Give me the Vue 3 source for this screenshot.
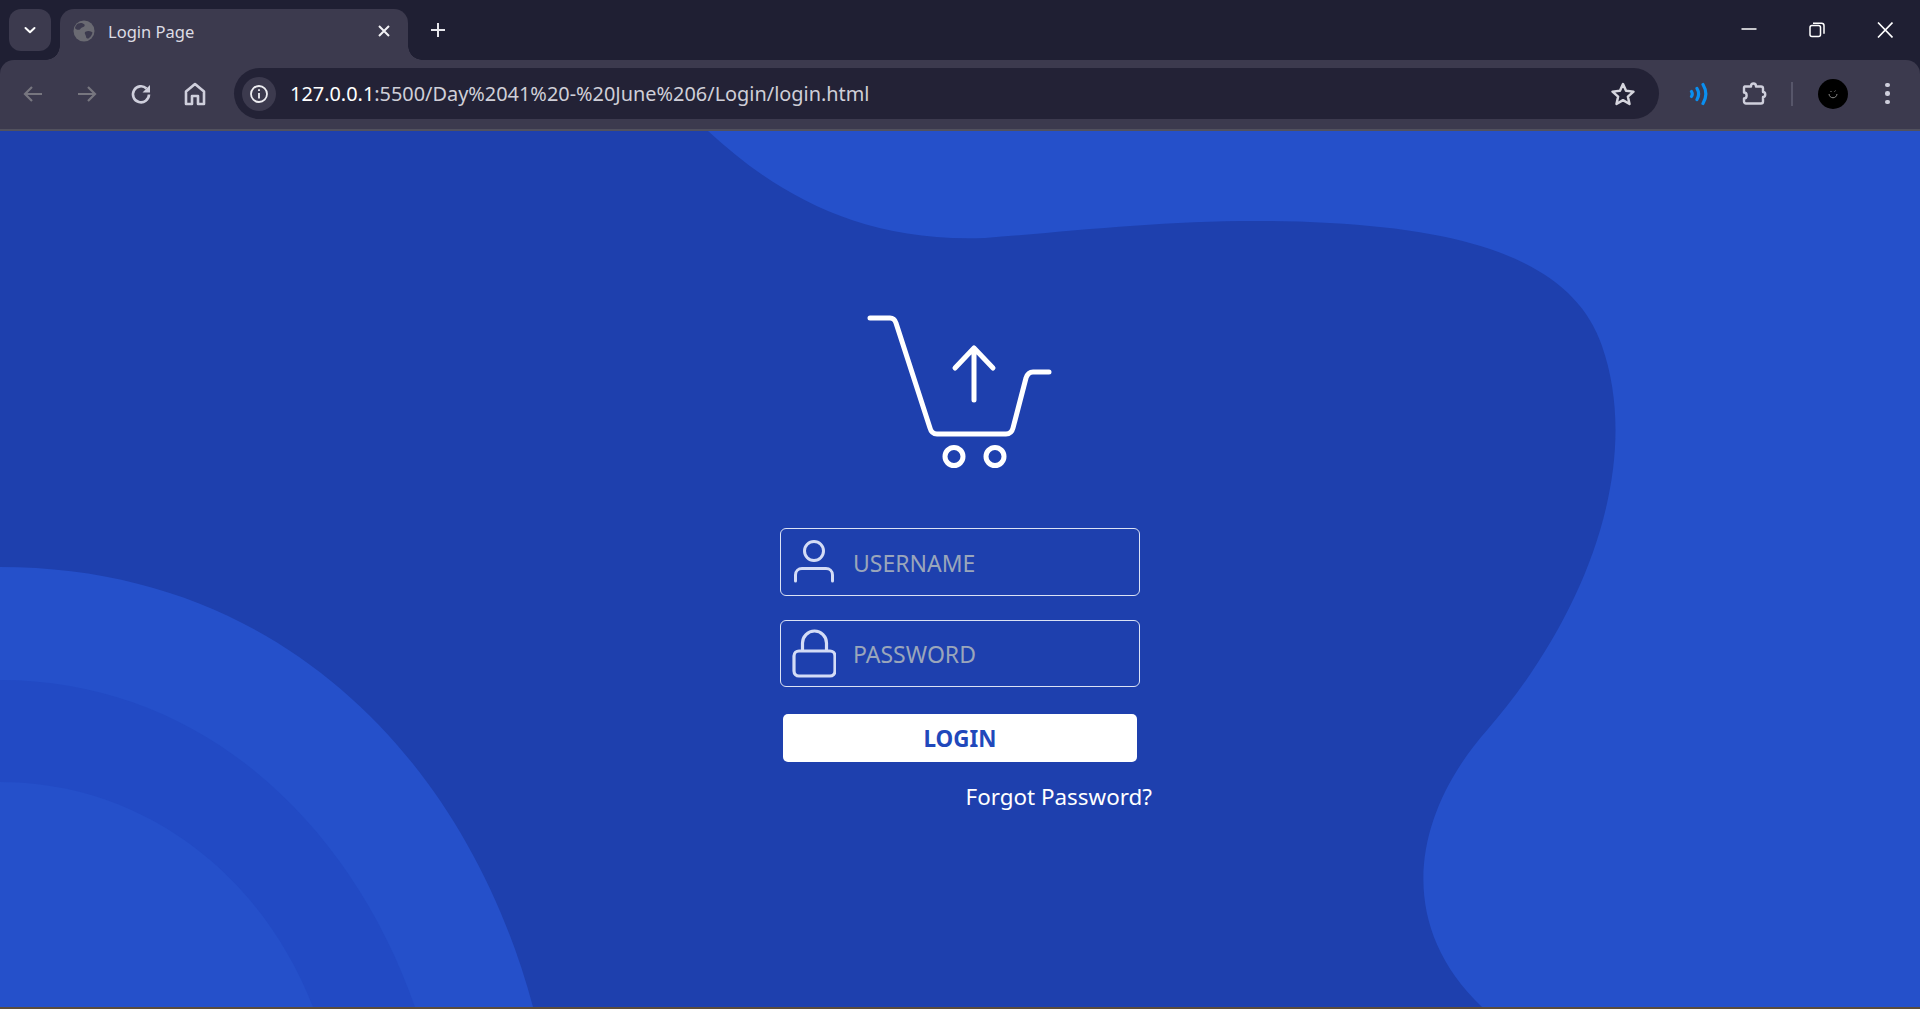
<script setup>
import { ref } from 'vue';

const username = ref('');
const password = ref('');
const url = '127.0.0.1';
const urlRest = ':5500/Day%2041%20-%20June%206/Login/login.html';
</script>

<template>
  <div class="window">
    <!-- tab strip -->
    <div class="tabstrip">
      <button class="tab-search">
        <svg width="16" height="16" viewBox="0 0 16 16"><path d="M3.500 6 8 10.200 12.500 6" fill="none" stroke="#fff" stroke-width="2" stroke-linecap="round" stroke-linejoin="round"/></svg>
      </button>
      <div class="tab">
        <svg class="favicon" width="22" height="22" viewBox="0 0 22 22">
          <circle cx="11" cy="11" r="10.500" fill="#6a6a72"/>
          <path d="M5 3.500c3-1 5-.5 6.500 1 .8 1.500-.8 2.500-2.500 3-1.500.5-1.500 2-3 2.300C4 10 2.500 9 2 8c.5-2 1.500-3.500 3-4.500ZM12 12c2-1 4-1.500 6-.5l1.500 1c-.5 2.500-2 4.500-4 6-1.500.3-2.500-.5-2.500-2s-2-2.800-1-4.500Z" fill="#3c3a4e"/>
        </svg>
        <span class="tab-title">Login Page</span>
        <svg class="tab-close" width="14" height="14" viewBox="0 0 14 14"><path d="M2 2l10 10M12 2 2 12" stroke="#f2f2f5" stroke-width="2"/></svg>
      </div>
      <button class="new-tab">
        <svg width="16" height="16" viewBox="0 0 16 16"><path d="M8 1v14M1 8h14" stroke="#e6e6ec" stroke-width="2"/></svg>
      </button>
      <div class="window-controls">
        <svg width="16" height="16" viewBox="0 0 16 16"><path d="M.5 7h15" stroke="#fff" stroke-width="1.500"/></svg>
        <svg width="16" height="16" viewBox="0 0 16 16" fill="none" stroke="#fff" stroke-width="1.500"><rect x="1" y="3.500" width="10.500" height="11" rx="2"/><path d="M4 1.200h8.500a2.500 2.500 0 0 1 2.500 2.500v8"/></svg>
        <svg width="16" height="16" viewBox="0 0 16 16"><path d="M1 .5l14.500 15M15.500.5 1 15.500" stroke="#fff" stroke-width="1.600"/></svg>
      </div>
    </div>

    <!-- toolbar -->
    <div class="toolbar">
      <div class="nav">
        <svg width="22" height="22" viewBox="0 0 22 22" fill="none" stroke="#77767f" stroke-width="2.200"><path d="M20 11H3M10 4l-7 7 7 7"/></svg>
        <svg width="22" height="22" viewBox="0 0 22 22" fill="none" stroke="#77767f" stroke-width="2.200"><path d="M2 11h17M12 4l7 7-7 7"/></svg>
        <svg width="22" height="22" viewBox="0 0 22 22" fill="none" stroke="#cfcfdc" stroke-width="2.600"><path d="M19 11.500A8 8 0 1 1 16.500 5.500"/><path d="M20 2v7.500h-7.500Z" fill="#cfcfdc" stroke="none"/></svg>
        <svg width="22" height="24" viewBox="0 0 22 24" fill="none" stroke="#cfcfdc" stroke-width="2.600"><path d="M2 22V9.500L11 2l9 7.500V22h-6v-8H8v8Z" stroke-linejoin="round"/></svg>
      </div>
      <div class="omnibox">
        <span class="site-info">
          <svg width="20" height="20" viewBox="0 0 20 20" fill="none" stroke="#eeeef2" stroke-width="1.800"><circle cx="10" cy="10" r="8"/><path d="M10 9v5.500M10 5.300v1.800"/></svg>
        </span>
        <span class="url"><span class="host">{{ url }}</span>{{ urlRest }}</span>
        <svg class="star" width="26" height="26" viewBox="0 0 24 24"><path d="M12 2.800l2.800 6.300 6.900.7-5.200 4.600 1.500 6.800-6-3.500-6 3.500 1.500-6.800-5.200-4.600 6.900-.7Z" fill="none" stroke="#d6d6de" stroke-width="2.300" stroke-linejoin="round"/></svg>
      </div>
      <div class="actions">
        <svg class="ext-wave" width="20" height="24" viewBox="0 0 20 24" fill="none" stroke="#0a8ff0" stroke-width="3.200" stroke-linecap="round"><path d="M2.500 9.500c1 1.600 1 3.400 0 5M8 6.500c2 3.400 2 7.600 0 11M14 2.500c3.600 6 3.600 13 0 19"/></svg>
        <svg class="ext-puzzle" width="26" height="26" viewBox="0 0 26 26" fill="none" stroke="#cfcfdc" stroke-width="2.400" stroke-linejoin="round"><path d="M3.500 5.500h6.500c0-4 5-4 5 0h5a2 2 0 0 1 2 2v3.500c3 0 3 5 0 5v4.500a2 2 0 0 1-2 2H5a2 2 0 0 1-2-2v-3c3.500 0 3.500-6 0-6V7a2 2 0 0 1 .5-1.500Z"/></svg>
        <span class="divider"></span>
        <span class="avatar">
          <svg width="12" height="12" viewBox="0 0 12 12" fill="none" stroke="#8a8a8a" stroke-width="1"><path d="M2 6c.5 5 7.500 5 8 0M3.500 3.500h1M7.500 3.500l1-.8"/></svg>
        </span>
        <span class="dots"><i></i><i></i><i></i></span>
      </div>
    </div>

    <!-- page -->
    <main class="page">
      <svg class="blobs" width="1920" height="876" viewBox="0 0 1920 876">
        <rect width="1920" height="876" fill="#2550ca"/>
        <path d="M708 0C775 62 860 112 985 107C1100 98 1200 85 1330 92C1480 100 1575 135 1602 215C1642 330 1590 480 1488 598C1415 680 1392 790 1482 876H533C470 640 290 436 0 436V0Z" fill="#1e40ae"/>
        <path d="M0 549C200 549 350 690 415 876H0Z" fill="#224ac4"/>
        <path d="M0 651C140 651 260 740 313 876H0Z" fill="#2550ca"/>
      </svg>

      <form class="login" @submit.prevent>
        <svg class="cart" width="200" height="170" viewBox="0 0 200 170" fill="none" stroke="#fff" stroke-width="5" stroke-linecap="round" stroke-linejoin="round">
          <path d="M10 8h20c3 0 5 2 6 5l34 105c1 4 3 6 7 6h69c4 0 6-2 7-6l13-50c1-3 3-6 7-6h16"/>
          <path d="M114 90V38M95 58l19-20 19 20"/>
          <circle cx="94" cy="146.500" r="9"/>
          <circle cx="135" cy="146.500" r="9"/>
        </svg>

        <label class="field">
          <svg class="field-icon" width="44" height="44" viewBox="0 0 44 44" fill="none" stroke="#d4dcf6" stroke-width="3" stroke-linecap="round">
            <circle cx="22" cy="11" r="9.500"/>
            <path d="M3.500 41v-6c0-4 3-6.500 6.500-6.500h24c3.500 0 6.500 2.500 6.500 6.500v6"/>
          </svg>
          <input v-model="username" type="text" placeholder="USERNAME" />
        </label>

        <label class="field second">
          <svg class="field-icon" width="44" height="50" viewBox="0 0 44 50" fill="none" stroke="#d4dcf6" stroke-width="3.200">
            <rect x="2" y="22" width="41" height="25" rx="5"/>
            <path d="M10.500 22v-8a12 12 0 0 1 24 0v8"/>
          </svg>
          <input v-model="password" type="password" placeholder="PASSWORD" />
        </label>

        <button class="login-btn" type="submit">LOGIN</button>
        <div class="forgot">Forgot Password?</div>
      </form>
    </main>
  </div>
</template>

<style>
html, body {
  margin: 0;
  height: 100%;
  overflow: hidden;
}
</style>

<style scoped>
.window {
  width: 1920px;
  height: 1009px;
  display: flex;
  flex-direction: column;
  font-family: "Noto Sans", "Open Sans", sans-serif;
  background: #1f1f33;
}

/* tab strip */
.tabstrip {
  height: 60px;
  flex: none;
  display: flex;
  align-items: flex-end;
  padding-left: 9px;
  box-sizing: border-box;
}
button {
  border: none;
  padding: 0;
  font-family: inherit;
}
.tab-search {
  position: relative;
  z-index: 1;
  width: 42px;
  height: 42px;
  margin-bottom: 9px;
  border-radius: 12px;
  background: #3c3a4e;
  display: flex;
  align-items: center;
  justify-content: center;
}
.tab {
  position: relative;
  width: 348px;
  height: 51px;
  margin-left: 9px;
  padding: 0 17px 7px 13px;
  box-sizing: border-box;
  background: #3c3a4e;
  border-radius: 14px 14px 0 0;
  display: flex;
  align-items: center;
}
.tab::before,
.tab::after {
  content: "";
  position: absolute;
  bottom: 0;
  width: 14px;
  height: 14px;
}
.tab::before {
  left: -14px;
  background: radial-gradient(circle at 0 0, #1f1f33 13.500px, #3c3a4e 14px);
}
.tab::after {
  right: -14px;
  background: radial-gradient(circle at 100% 0, #1f1f33 13.500px, #3c3a4e 14px);
}
.tab-title {
  margin: 0 0 0 13px;
  flex: 1;
  font-size: 16.500px;
  color: #dcdce4;
}
.new-tab {
  margin: 0 0 22px 22px;
  background: none;
  width: 16px;
  height: 16px;
}
.window-controls {
  margin-left: auto;
  margin-bottom: 22px;
  padding-right: 27px;
  display: flex;
  gap: 52px;
  height: 16px;
}

/* toolbar */
.toolbar {
  height: 71px;
  flex: none;
  display: flex;
  align-items: center;
  box-sizing: border-box;
  padding: 0 0 2px 22px;
  background: #3c3a4e;
  border-bottom: 2px solid #52515d;
  border-radius: 14px 14px 0 0;
}
.nav {
  display: flex;
  align-items: center;
  gap: 32px;
  width: 212px;
}
.omnibox {
  width: 1425px;
  height: 51px;
  background: #232236;
  border-radius: 26px;
  display: flex;
  align-items: center;
  padding: 0 23px 0 8px;
  box-sizing: border-box;
}
.site-info {
  width: 34px;
  height: 34px;
  border-radius: 50%;
  background: #3c3a4e;
  display: flex;
  align-items: center;
  justify-content: center;
}
.url {
  margin-left: 14px;
  flex: 1;
  font-size: 19.900px;
  color: #cfcfd8;
  white-space: nowrap;
}
.host {
  color: #fff;
}
.actions {
  flex: 1;
  display: flex;
  align-items: center;
  padding-left: 30px;
}
.ext-puzzle {
  margin-left: 32px;
}
.divider {
  width: 2px;
  height: 24px;
  margin-left: 24px;
  background: #57566a;
}
.avatar {
  width: 30px;
  height: 30px;
  margin-left: 25px;
  border-radius: 50%;
  background: #000;
  display: flex;
  align-items: center;
  justify-content: center;
}
.dots {
  margin-left: 37px;
  display: flex;
  flex-direction: column;
  gap: 4px;
}
.dots i {
  width: 4.500px;
  height: 4.500px;
  border-radius: 50%;
  background: #cfcfdc;
}

/* page */
.page {
  position: relative;
  flex: 1;
  overflow: hidden;
  background: #2550ca;
  border-bottom: 2px solid #5b4c3c;
  box-sizing: border-box;
}
.blobs {
  position: absolute;
  top: 0;
  left: 0;
}
.login {
  position: relative;
  width: 360px;
  margin: 0 auto;
  padding-top: 179px;
  display: flex;
  flex-direction: column;
  align-items: center;
}
.cart {
  display: block;
  margin-bottom: 48px;
}
.field {
  width: 360px;
  height: 68px;
  box-sizing: border-box;
  border: 1px solid #dbe2f5;
  border-radius: 6px;
  display: flex;
  align-items: center;
  padding-left: 11px;
}
.field.second {
  height: 67px;
  margin-top: 24px;
}
.field-icon {
  flex: none;
  filter: blur(0.4px);
}
.field input {
  flex: 1;
  min-width: 0;
  margin-left: 17px;
  padding: 1px 0 0;
  background: none;
  border: none;
  outline: none;
  font-family: inherit;
  font-size: 23px;
  color: #fff;
}
.field input::placeholder {
  color: #9aa6bb;
  opacity: 1;
}
.login-btn {
  width: 354px;
  height: 48px;
  margin-top: 27px;
  background: #fff;
  border-radius: 5px;
  color: #2148bb;
  font-size: 22.400px;
  font-weight: 700;
}
.forgot {
  align-self: flex-end;
  margin-right: -12px;
  margin-top: 18px;
  font-size: 22.400px;
  line-height: 34px;
  color: #fff;
}
</style>
